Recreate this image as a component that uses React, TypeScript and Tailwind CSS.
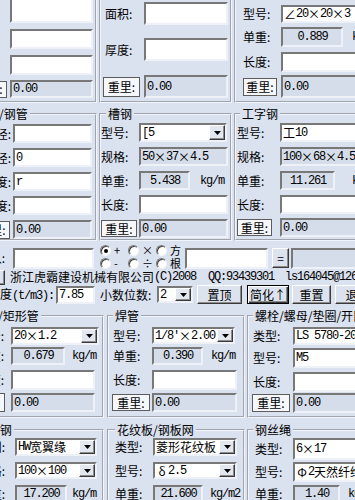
import type { ReactNode } from 'react';

const cjk = "font-['Noto_Sans_CJK_SC',sans-serif]";
const asc = "font-['Liberation_Mono',monospace] text-[12px] tracking-[-1.2px]";
const sunk = 'border-2 border-t-[#787878] border-l-[#787878] border-r-[#eef1f7] border-b-[#eef1f7]';
const raised = 'border border-t-white border-l-white border-r-[#3a3a3a] border-b-[#3a3a3a] shadow-[inset_-1px_-1px_0_#8c8c8c]';
const grp = 'shrink-0 min-w-0 border-2 border-[#f0f5ff] [--tw-border-style:groove] [border-style:groove]';

function Rich({ s }: { s: string }) {
  const runs: { k: string; t: string }[] = [];
  for (const ch of Array.from(s)) {
    const k = /[×∠Φδ÷]/.test(ch) ? 'w' : /[\u4e00-\u9fff]/.test(ch) ? 'c' : 'a';
    const last = runs[runs.length - 1];
    if (last && last.k === k && k !== 'w') last.t += ch;
    else runs.push({ k, t: ch });
  }
  return (
    <>
      {runs.map((r, i) =>
        r.k === 'a' ? (
          <span key={i} className={asc}>{r.t}</span>
        ) : r.k === 'c' ? (
          <span key={i} className={`${cjk} text-[12px]`}>{r.t}</span>
        ) : (
          <span key={i} className={`${cjk} inline-block w-[12px] text-center text-[12px]`}>{r.t}</span>
        )
      )}
    </>
  );
}

function Field({ c, v = '', ro = false, center = false }: { c: string; v?: string; ro?: boolean; center?: boolean }) {
  return (
    <div className={`flex shrink-0 items-center overflow-hidden whitespace-pre pl-[1px] ${sunk} ${ro ? 'bg-[#d6ddea]' : 'bg-white'} ${center ? 'justify-center' : ''} ${c}`}>
      <Rich s={v} />
    </div>
  );
}

function Combo({ c, v }: { c: string; v: string }) {
  return (
    <div className={`flex shrink-0 items-center overflow-hidden whitespace-pre bg-white pl-[1px] ${sunk} ${c}`}>
      <Rich s={v} />
      <div className={`ml-auto flex h-full w-[16px] shrink-0 items-center justify-center bg-[#e2e7f0] ${raised}`}>
        <svg width="7" height="4" viewBox="0 0 7 4">
          <path d="M0 0h7L3.5 4z" fill="#000" />
        </svg>
      </div>
    </div>
  );
}

function WBtn({ c }: { c: string }) {
  return (
    <div className={`flex shrink-0 items-center justify-center border border-[#5c5c5c] bg-[#f6f7fa] text-[12px] ${c}`}>
      重里:
    </div>
  );
}

function Btn({ c, t }: { c: string; t: string }) {
  return <div className={`flex shrink-0 items-center justify-center bg-[#dde3ee] text-[12px] ${raised} ${c}`}>{t}</div>;
}

function Row({ m, l, t, children }: { m: string; l: string; t?: ReactNode; children: ReactNode }) {
  return (
    <div className={`flex items-center ${m}`}>
      <div className={`flex shrink-0 items-center whitespace-nowrap ${l}`}>{t}</div>
      {children}
    </div>
  );
}

function Group({ c, title, lm, children }: { c: string; title: string; lm: string; children: ReactNode }) {
  return (
    <fieldset className={`${grp} ${c}`}>
      <legend className={`whitespace-nowrap px-[2px] text-[12px] leading-[14px] ${lm}`}>{title}</legend>
      {children}
    </fieldset>
  );
}

function Radio({ on = false, t }: { on?: boolean; t: string }) {
  return (
    <div className="flex h-[13px] items-center">
      <span className="ml-[1px] flex h-[11px] w-[11px] shrink-0 items-center justify-center rounded-full border border-t-[#7a7a7a] border-l-[#7a7a7a] border-r-[#f4f4f4] border-b-[#f4f4f4] bg-white shadow-[inset_1px_1px_0_#444]">
        {on && <span className="h-[4px] w-[4px] rounded-full bg-black" />}
      </span>
      <span className="ml-[3px] text-[11px] leading-[11px]">{t}</span>
    </div>
  );
}

const kg = (m: string, t = 'kg/m') => <span className={`${asc} ${m}`}>{t}</span>;

export default function App() {
  return (
    <div className={`h-[500px] w-[355px] overflow-hidden bg-[#dae1ef] text-[12px] leading-none text-black ${cjk}`}>
      {/* 顶部三组 */}
      <div className="flex h-[103px]">
        <div className={`${grp} -ml-[60px] h-[103px] w-[157px] border-t-0`}>
          <Row m="-mt-[3px]" l="w-[68px]"><Field c="h-[26px] w-[83px]" /></Row>
          <Row m="mt-[6px]" l="w-[68px]"><Field c="h-[20px] w-[83px]" /></Row>
          <Row m="mt-[6px]" l="w-[68px]"><Field c="h-[20px] w-[83px]" /></Row>
          <Row m="mt-[5px]" l="w-[68px] justify-end pr-[3px]" t={<WBtn c="h-[17px] w-[36px]" />}>
            <Field c="h-[18px] w-[83px]" ro v="0.00" />
          </Row>
        </div>
        <div className={`${grp} ml-[2px] h-[103px] w-[133px] border-t-0`}>
          <Row m="mt-[2px]" l="w-[43px] pl-[4px]" t="面积:"><Field c="h-[23px] w-[84px]" /></Row>
          <Row m="mt-[13px]" l="w-[43px] pl-[4px]" t="厚度:"><Field c="h-[23px] w-[84px]" /></Row>
          <Row m="mt-[14px]" l="w-[43px] pl-[2px]" t={<WBtn c="h-[20px] w-[37px]" />}>
            <Field c="h-[23px] w-[84px]" ro v="0.00" />
          </Row>
        </div>
        <div className={`${grp} ml-[2px] h-[103px] w-[140px] border-t-0`}>
          <Row m="mt-[5px]" l="w-[45px] pl-[7px]" t="型号:"><Field c="h-[18px] w-[90px]" v="∠20×20×3" /></Row>
          <Row m="mt-[4px]" l="w-[45px] pl-[7px]" t="单重:">
            <Field c="h-[20px] w-[62px]" ro center v="0.889" />
            {kg('ml-[9px]')}
          </Row>
          <Row m="mt-[5px]" l="w-[45px] pl-[7px]" t="长度:"><Field c="h-[20px] w-[90px]" /></Row>
          <Row m="mt-[3px]" l="w-[45px] pl-[7px]" t={<WBtn c="h-[18px] w-[34px]" />}>
            <Field c="h-[23px] w-[90px]" ro v="0.00" />
          </Row>
        </div>
      </div>

      {/* 钢管 / 槽钢 / 工字钢 */}
      <div className="flex h-[138px] items-start">
        <Group c="-ml-[60px] mt-[4px] h-[134px] w-[157px]" title="无缝/钢管" lm="ml-[31px]">
          <Row m="mt-[3px]" l="w-[71px] justify-end pr-[2px]" t="外径:"><Field c="h-[19px] w-[79px]" /></Row>
          <Row m="mt-[5px]" l="w-[71px] justify-end pr-[2px]" t="内径:"><Field c="h-[19px] w-[79px]" v="0" /></Row>
          <Row m="mt-[5px]" l="w-[71px] justify-end pr-[2px]" t="厚度:"><Field c="h-[19px] w-[79px]" v="r" /></Row>
          <Row m="mt-[5px]" l="w-[71px] justify-end pr-[2px]" t="长度:"><Field c="h-[19px] w-[79px]" /></Row>
          <Row m="mt-[5px]" l="w-[71px] justify-end pr-[3px]" t={<WBtn c="h-[18px] w-[36px]" />}>
            <Field c="h-[19px] w-[79px]" ro v="0.00" />
          </Row>
        </Group>
        <Group c="ml-[2px] mt-[4px] h-[134px] w-[133px]" title="槽钢" lm="ml-[5px]">
          <Row m="mt-[2px]" l="w-[38px]" t="型号:"><Combo c="h-[19px] w-[88px]" v="[5" /></Row>
          <Row m="mt-[5px]" l="w-[38px]" t="规格:"><Field c="h-[19px] w-[89px]" ro v="50×37×4.5" /></Row>
          <Row m="mt-[5px]" l="w-[38px]" t="单重:">
            <Field c="h-[19px] w-[51px]" ro center v="5.438" />
            {kg('ml-[10px]')}
          </Row>
          <Row m="mt-[5px]" l="w-[38px]" t="长度:"><Field c="h-[19px] w-[89px]" /></Row>
          <Row m="mt-[5px]" l="w-[38px]" t={<WBtn c="h-[17px] w-[36px]" />}>
            <Field c="h-[19px] w-[89px]" ro v="0.00" />
          </Row>
        </Group>
        <Group c="ml-[2px] mt-[4px] h-[134px] w-[140px]" title="工字钢" lm="ml-[4px]">
          <Row m="mt-[2px]" l="w-[44px] pl-[1px]" t="型号:"><Field c="h-[19px] w-[90px]" v="工10" /></Row>
          <Row m="mt-[5px]" l="w-[44px] pl-[1px]" t="规格:"><Field c="h-[19px] w-[90px]" ro v="100×68×4.5" /></Row>
          <Row m="mt-[5px]" l="w-[44px] pl-[1px]" t="单重:">
            <Field c="h-[19px] w-[55px]" ro center v="11.261" />
            {kg('ml-[17px]')}
          </Row>
          <Row m="mt-[5px]" l="w-[44px] pl-[1px]" t="长度:"><Field c="h-[19px] w-[90px]" /></Row>
          <Row m="mt-[4px]" l="w-[44px] pl-[1px]" t={<WBtn c="h-[17px] w-[35px]" />}>
            <Field c="h-[19px] w-[90px]" ro v="0.00" />
          </Row>
        </Group>
      </div>

      {/* 计算器 / 公司 / 设置 */}
      <div className="flex h-[64px] flex-col">
        <div className="mt-[5px] flex h-[24px] items-center">
          <div className="flex w-[13px] shrink-0 justify-end whitespace-nowrap pr-[8px]">输入:</div>
          <Field c="h-[21px] w-[81px]" />
          <div className="ml-[5px] -mt-[2px] grid shrink-0 grid-cols-[28px_28px_28px] grid-rows-[13px_13px]">
            <Radio on t="+" />
            <Radio t="×" />
            <Radio t="方" />
            <Radio t="-" />
            <Radio t="÷" />
            <Radio t="根" />
          </div>
          <Field c="ml-[2px] h-[21px] w-[83px]" />
          <Btn c="ml-[4px] h-[20px] w-[17px]" t="=" />
          <Field c="ml-[2px] h-[21px] w-[80px]" ro />
        </div>
        <div className="flex h-[14px] items-center whitespace-nowrap">
          <div className={`-ml-[20px] h-[15px] w-[25px] shrink-0 bg-[#dde3ee] ${raised}`} />
          <span className="ml-[5px] text-[12px]">浙江虎霸建设机械有限公司</span>
          <span className={asc}>(C)2008</span>
          <span className={`${asc} ml-[12px]`}>QQ:93439301</span>
          <span className={`${asc} ml-[11px]`}>ls164045@126.com</span>
        </div>
        <div className="mt-[1px] flex h-[19px] items-center">
          <div className="flex w-[56px] shrink-0 justify-end whitespace-nowrap pr-[2px]">
            <span>
              密度<span className={asc}>(t/m3):</span>
            </span>
          </div>
          <Field c="h-[18px] w-[39px]" v="7.85" />
          <div className="ml-[5px] w-[57px] shrink-0 whitespace-nowrap">小数位数:</div>
          <Combo c="h-[17px] w-[36px]" v="2" />
          <Btn c="ml-[4px] h-[19px] w-[45px]" t="置顶" />
          <div className="ml-[5px] flex h-[19px] w-[42px] shrink-0 items-center justify-center border border-black bg-[#dde3ee] text-[12px] shadow-[inset_1px_1px_0_#fff,inset_-1px_-1px_0_#3a3a3a,inset_-2px_-2px_0_#8c8c8c]">
            简化↑
          </div>
          <Btn c="ml-[3px] h-[19px] w-[39px]" t="重置" />
          <Btn c="ml-[4px] h-[19px] w-[45px]" t="退出" />
        </div>
      </div>

      {/* 方矩形管 / 焊管 / 螺栓 */}
      <div className="flex h-[113px] items-start">
        <Group c="-ml-[60px] mt-[4px] h-[109px] w-[164px]" title="方/矩形管" lm="ml-[42px]">
          <Row m="mt-[4px]" l="w-[69px] justify-end pr-[7px]" t="型号:"><Combo c="h-[18px] w-[88px]" v="20×1.2" /></Row>
          <Row m="mt-[2px]" l="w-[69px] justify-end pr-[7px]" t="单重:">
            <Field c="h-[18px] w-[54px]" ro center v="0.679" />
            {kg('ml-[7px]')}
          </Row>
          <Row m="mt-[5px]" l="w-[69px] justify-end pr-[7px]" t="长度:"><Field c="h-[20px] w-[84px]" /></Row>
          <Row m="mt-[3px]" l="w-[69px] justify-end pr-[6px]" t={<WBtn c="h-[19px] w-[36px]" />}>
            <Field c="h-[19px] w-[84px]" ro v="0.00" />
          </Row>
        </Group>
        <Group c="ml-[3px] mt-[4px] h-[109px] w-[138px]" title="焊管" lm="ml-[4px]">
          <Row m="mt-[4px]" l="w-[43px] pl-[4px]" t="型号:"><Combo c="h-[17px] w-[83px]" v="1/8'×2.00" /></Row>
          <Row m="mt-[3px]" l="w-[43px] pl-[4px]" t="单重:">
            <Field c="h-[18px] w-[51px]" ro center v="0.390" />
            {kg('ml-[8px]')}
          </Row>
          <Row m="mt-[5px]" l="w-[43px] pl-[4px]" t="长度:"><Field c="h-[20px] w-[85px]" /></Row>
          <Row m="mt-[3px]" l="w-[43px] pl-[3px]" t={<WBtn c="h-[17px] w-[38px]" />}>
            <Field c="h-[19px] w-[85px]" ro v="0.00" />
          </Row>
        </Group>
        <Group c="ml-[2px] mt-[4px] h-[109px] w-[140px]" title="螺栓/螺母/垫圈/开口销" lm="ml-[4px]">
          <Row m="mt-[4px]" l="w-[44px] pl-[4px]" t="类型:"><Field c="h-[18px] w-[90px]" v="LS 5780-2000" /></Row>
          <Row m="mt-[3px]" l="w-[44px] pl-[4px]" t="型号:"><Field c="h-[20px] w-[90px]" v="M5" /></Row>
          <Row m="mt-[4px]" l="w-[44px] pl-[4px]" t="长度:"><Field c="h-[20px] w-[90px]" /></Row>
          <Row m="mt-[1px]" l="w-[44px] pl-[3px]" t={<WBtn c="h-[18px] w-[38px]" />}>
            <Field c="h-[20px] w-[90px]" ro v="0.00" />
          </Row>
        </Group>
      </div>

      {/* H型钢 / 花纹板 / 钢丝绳 */}
      <div className="flex items-start">
        <Group c="-ml-[60px] mt-[5px] h-[100px] w-[164px]" title="H型钢" lm="ml-[35px]">
          <Row m="mt-[1px]" l="w-[73px] justify-end pr-[10px]" t="类别:"><Combo c="h-[18px] w-[82px]" v="HW宽翼缘" /></Row>
          <Row m="mt-[6px]" l="w-[73px] justify-end pr-[10px]" t="规格:"><Combo c="h-[17px] w-[82px]" v="100×100" /></Row>
          <Row m="mt-[6px]" l="w-[73px] justify-end pr-[10px]" t="单重:">
            <Field c="h-[18px] w-[52px]" ro center v="17.200" />
            {kg('ml-[5px]')}
          </Row>
        </Group>
        <Group c="ml-[3px] mt-[5px] h-[100px] w-[138px]" title="花纹板/钢板网" lm="ml-[6px]">
          <Row m="mt-[1px]" l="w-[44px] pl-[6px]" t="类型:"><Combo c="h-[18px] w-[84px]" v="菱形花纹板" /></Row>
          <Row m="mt-[6px]" l="w-[44px] pl-[6px]" t="型号:"><Combo c="h-[17px] w-[84px]" v="δ2.5" /></Row>
          <Row m="mt-[6px]" l="w-[44px] pl-[6px]" t="单重:">
            <Field c="h-[18px] w-[50px]" ro center v="21.600" />
            {kg('ml-[7px]', 'kg/m2')}
          </Row>
        </Group>
        <Group c="ml-[2px] mt-[5px] h-[100px] w-[140px]" title="钢丝绳" lm="ml-[4px]">
          <Row m="mt-[1px]" l="w-[44px] pl-[6px]" t="类型:"><Field c="h-[22px] w-[90px]" v="6×17" /></Row>
          <Row m="mt-[2px]" l="w-[44px] pl-[6px]" t="型号:"><Field c="h-[20px] w-[90px]" v="Φ2天然纤维芯" /></Row>
          <Row m="mt-[3px]" l="w-[44px] pl-[6px]" t="单重:">
            <Field c="h-[18px] w-[47px]" ro center v="1.40" />
            {kg('ml-[8px]')}
          </Row>
        </Group>
      </div>
    </div>
  );
}
